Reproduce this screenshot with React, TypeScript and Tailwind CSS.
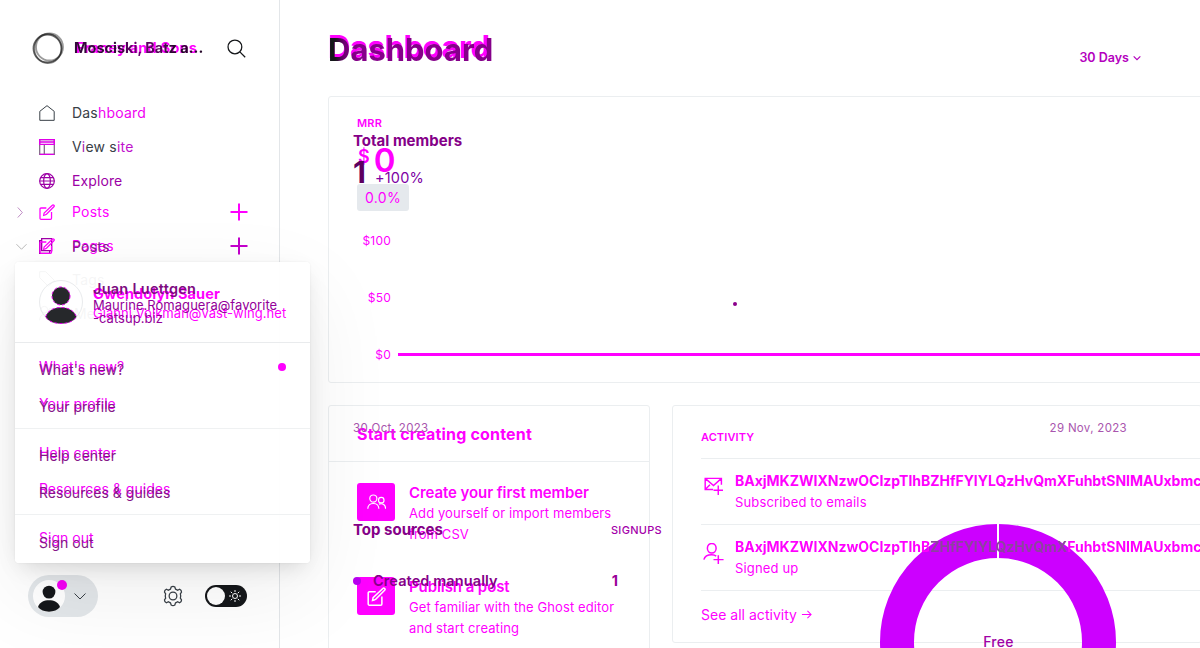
import type { ReactNode } from "react";

type IconProps = { className?: string; children: ReactNode; box?: string; width?: number };

function Icon({ className = "", children, box = "0 0 24 24", width = 1.5 }: IconProps) {
  return (
    <svg viewBox={box} fill="none" stroke="currentColor" strokeWidth={width} className={"shrink-0 " + className}>
      {children}
    </svg>
  );
}

const PenIcon = ({ className }: { className: string }) => (
  <Icon className={className} width={1.9}>
    <path d="M18.8 12v9.5a1.5 1.5 0 0 1-1.5 1.5h-14A1.5 1.5 0 0 1 1.500 21.500v-14A1.500 1.500 0 0 1 3 6h8" />
    <path d="M9 16.500l-2 .500.700-3.500L20 1.800a1.600 1.600 0 0 1 2.300 2.300L11.200 15.300z" />
  </Icon>
);

const Person = ({ className }: { className: string }) => (
  <svg viewBox="0 0 32 38" className={className}>
    <circle cx="16" cy="10" r="9" />
    <path d="M0.500 31C3 24 9 21.500 16 21.500S29 24 31.500 31C28 35.500 23 37.500 16 37.500S4 35.500 0.500 31z" />
  </svg>
);

const Plus = () => (
  <Icon className="ml-auto mr-[31px] size-[18px]" box="0 0 18 18" width={2}>
    <path d="M9 0.500v17M0.500 9h17" />
  </Icon>
);

function Sidebar() {
  return (
    <aside className="flex h-full w-[280px] shrink-0 flex-col border-r border-[#e3e6e9] text-[14px] tracking-[0.200px] text-[#394047]">
      <header className="flex h-24 items-center pl-8 pr-[33px]">
        <svg viewBox="0 0 32 32" className="size-8 shrink-0" fill="none" stroke="#222">
          <circle cx="15.500" cy="16.500" r="14" strokeWidth="1.800" opacity="0.7" />
          <ellipse cx="17.500" cy="15" rx="13.500" ry="13.500" strokeWidth="1.800" opacity="0.45" />
          <ellipse cx="16" cy="16.500" rx="13.500" ry="14.800" strokeWidth="1.400" opacity="0.45" />
        </svg>
        <div className="relative ml-2.5 whitespace-nowrap text-[14.500px] font-bold tracking-normal">
          <span className="absolute left-0.5 top-0 text-[#ff00ff] tracking-[0.250px]">Franey and Sons</span>
          <span className="relative bg-[linear-gradient(90deg,#33083a_45px,#6d0072_60px,#4b0650_90px,#26082a_100px)] bg-clip-text text-transparent">Mosciski, Batz a...</span>
        </div>
        <Icon className="ml-auto size-[19px] text-[#15171a]" width={1.6}>
          <circle cx="10" cy="10" r="8.700" />
          <path d="M16.200 16.200L23 23" />
        </Icon>
      </header>
      <nav className="flex flex-col">
        <div className="flex h-[34px] items-center gap-[17px] pl-[39px]">
          <Icon className="size-4"><path d="M1.200 9.500L12 1l10.800 8.500V23H1.200z" /></Icon>
          <span className="-mt-px">Das<span className="text-[#f000f2]">hboard</span></span>
        </div>
        <div className="flex h-[34px] items-center gap-[17px] pl-[39px]">
          <Icon className="size-4 text-[#85718a]" width={2}>
            <path d="M1 1h22v22H1zM8 8v15" />
            <path d="M1 1h22v7H1zM1 4.500h22M1 23h22" stroke="#e000e8" />
          </Icon>
          <span className="-mt-px">V<span className="text-[#a31bb0]">i</span>ew s<span className="text-[#c010cc]">ite</span></span>
        </div>
        <div className="flex h-[34px] items-center gap-[17px] pl-[39px] text-[#9c00a5]">
          <Icon className="size-4" width={1.8}>
            <circle cx="12" cy="12" r="11" />
            <ellipse cx="12" cy="12" rx="5" ry="11" />
            <path d="M1 12h22M2.500 7h19M2.500 17h19" />
          </Icon>
          <span className="-mt-px tracking-[0.100px]">Explore</span>
        </div>
        <div className="flex h-7 items-center text-[#ff00ff]">
          <Icon className="ml-[15px] size-[11px] text-[#a35aab]"><path d="M6 1l10 11L6 23" /></Icon>
          <PenIcon className="ml-[13px] size-4" />
          <span className="-mt-px ml-[17px]">Posts</span>
          <Plus />
        </div>
        <div className="flex h-10 items-center text-[#c400cc]">
          <Icon className="ml-4 size-[11px] text-[#999]"><path d="M1 7l11 11L23 7" /></Icon>
          <span className="relative ml-3 size-4">
            <Icon className="size-4 text-[#a000a8]" width={2}><path d="M4 1h15v18H4zM4 4H1v19h15v-4" /></Icon>
            <span className="absolute inset-0 text-[#ff00ff]"><PenIcon className="size-4" /></span>
          </span>
          <span className="relative -mt-px ml-[17px]">
            <span className="absolute left-0 top-0 text-[#ff00ff]">Pages</span>
            <span className="relative top-px text-[#85208c]">Posts</span>
          </span>
          <Plus />
        </div>
        <div className="flex h-[26px] items-center gap-[17px] pl-[39px]">
          <Icon className="size-4"><path d="M1 1h9l13 13-9 9L1 10z" /></Icon>
          <span>Tags</span>
        </div>
        <div className="flex h-[42px] items-center gap-[19px] pl-[39px]">
          <Icon className="size-4"><circle cx="8" cy="7" r="5" /><circle cx="18" cy="9" r="4" /><path d="M1 23c0-12 14-12 14 0M16 15c4-1 7 2 7 8" /></Icon>
          <span>Members</span>
        </div>
      </nav>
      <footer className="mb-[31px] mt-auto flex items-center pl-7">
        <div className="relative flex h-[42px] w-[70px] items-center rounded-full bg-[#e3e7ea] pl-[5px]">
          <span className="flex size-8 items-end justify-center rounded-full bg-white">
            <Person className="h-[27px] w-[24px] fill-[#15171a]" />
          </span>
          <Icon className="ml-[9px] size-3" width={2}><path d="M1 7l11 11L23 7" /></Icon>
          <span className="absolute left-[29px] top-[5px] size-2.5 rounded-full bg-[#f500f5]" />
        </div>
        <Icon className="ml-[64px] size-[22px] text-[#394047]" width={1.4}>
          <circle cx="12" cy="12" r="4.200" />
          <path d="M10 2.200 Q12 .8 14 2.200 L14.700 4.500 Q16 5 17 5.700 L19.300 4.600 Q21.300 5.500 21.300 7.700 L20 9.700 Q20.300 11 20.400 12 Q20.300 13 20 14.300 L21.300 16.300 Q21.300 18.500 19.300 19.400 L17 18.300 Q16 19 14.700 19.500 L14 21.800 Q12 23.200 10 21.800 L9.300 19.500 Q8 19 7 18.300 L4.700 19.400 Q2.700 18.500 2.700 16.300 L4 14.300 Q3.600 13 3.600 12 Q3.600 11 4 9.700 L2.700 7.700 Q2.700 5.500 4.700 4.600 L7 5.700 Q8 5 9.300 4.500z" />
        </Icon>
        <div className="ml-[21px] flex h-[22px] w-[42px] items-center justify-between rounded-full bg-[#15171a] pl-0.5 pr-1.5">
          <span className="size-[18px] rounded-full bg-white" />
          <Icon className="size-3 text-white" width={2}>
            <circle cx="12" cy="12" r="5" />
            <path d="M12 0v4M12 20v4M0 12h4M20 12h4M3.500 3.500l3 3M17.500 17.500l3 3M3.500 20.500l3-3M17.500 6.500l3-3" />
          </Icon>
        </div>
      </footer>
    </aside>
  );
}

function MenuItem({ label, lift = "-top-[3px]", dot = false }: { label: string; lift?: string; dot?: boolean }) {
  return (
    <div className="relative flex h-[37px] items-center pl-6 pr-6 text-[14px] tracking-[0.030px]">
      <span className="relative -top-px leading-5">
        <span className={"absolute left-0 whitespace-nowrap text-[#f400f8] " + lift}>{label}</span>
        <span className="relative text-[#851688]">{label}</span>
      </span>
      {dot && <span className="relative -top-1 ml-auto size-2 rounded-full bg-[#ff00ff]" />}
    </div>
  );
}

function UserMenu() {
  return (
    <div className="absolute left-[15px] top-[262px] z-20 flex h-[301px] w-[295px] flex-col rounded bg-white/95 shadow-[0_0_2px_rgba(0,0,0,0.08),0_8px_22px_-6px_rgba(0,0,0,0.150),0_30px_90px_rgba(0,0,0,0.070)]">
      <div className="flex h-[81px] items-center border-b border-[#e9ebed] pl-6">
        <span className="flex size-11 items-center justify-center rounded-full border border-[#e9ebed]">
          <Person className="relative top-[3px] h-[38px] w-8 fill-[#26282b] stroke-[#e000e8] stroke-1 [stroke-dasharray:3_2]" />
        </span>
        <div className="relative ml-2.5 h-[81px] flex-1 whitespace-nowrap">
          <div className="absolute inset-0 flex flex-col pt-[23px] text-[#ff00ff]">
            <span className="text-[14.500px] font-bold leading-[18px] tracking-[0.100px]">Gwendolyn Sauer</span>
            <span className="text-[13px] leading-5 tracking-[0.050px]">Gianni.Volkman@vast-wing.net</span>
          </div>
          <div className="relative flex flex-col pt-[17px] text-[#930099]">
            <span className="text-[14.500px] font-semibold leading-[20px] tracking-[0.250px] text-[#7d0b80]">Juan Luettgen</span>
            <span className="text-[13px] leading-[13px] tracking-[0.040px]">Maurine.Romaguera@favorite<br />-catsup.biz</span>
          </div>
        </div>
      </div>
      <div className="h-[86px] border-b border-[#eff1f2] pt-[9px]">
        <MenuItem label="What's new?" dot />
        <MenuItem label="Your profile" />
      </div>
      <div className="h-[86px] border-b border-[#eff1f2] pt-[9px]">
        <MenuItem label="Help center" />
        <MenuItem label="Resources & guides" lift="-top-1" />
      </div>
      <div className="pt-2.5">
        <MenuItem label="Sign out" lift="-top-[5px]" />
      </div>
    </div>
  );
}

function RevenueCard() {
  return (
    <section className="h-[287px] w-[900px] rounded-[3px] border border-[#ebeef0] pl-7 pt-[18px] text-[#ff00ff]">
      <h2 className="text-[11px] font-semibold leading-4 tracking-[0.200px]">MRR</h2>
      <div className="flex h-[53px] items-start">
        <span className="ml-px mt-[16px] text-[18px] font-semibold leading-5">$</span>
        <span className="ml-1 mt-[9px] text-[33px] font-semibold leading-[40px]">0</span>
      </div>
      <span className="flex h-[27px] w-[52px] items-center justify-center rounded-[3px] bg-[#e5e9ed] text-[14px] tracking-[0.350px]">0.0%</span>
      <div className="mt-5 flex text-[12px] tracking-[0.200px]">
        <div className="flex h-[133px] w-[34px] flex-col justify-between text-right leading-[19px]">
          <span>$100</span><span>$50</span><span>$0</span>
        </div>
        <div className="ml-[7px] mt-[122px] h-[3px] flex-1 bg-[#ff00ff]" />
      </div>
    </section>
  );
}

function Step({ icon, title, children }: { icon: ReactNode; title: string; children: ReactNode }) {
  return (
    <div className="flex gap-3.5">
      <span className="flex size-[38px] items-center justify-center rounded-[3px] bg-[#ff00ff] text-white">{icon}</span>
      <div className="whitespace-nowrap">
        <h3 className="text-[15px] font-semibold leading-5 tracking-[-0.080px]">{title}</h3>
        <p className="text-[13px] leading-[21px] tracking-[0.100px]">{children}</p>
      </div>
    </div>
  );
}

const MEMBER = "BAxjMKZWIXNzwOCIzpTlhBZHfFYlYLQzHvQmXFuhbtSNIMAUxbmc";

function ActivityCard() {
  return (
    <section className="h-[238px] w-[560px] rounded-[3px] border border-[#ebeef0] pl-7 text-[13px] tracking-[0.150px] text-[#ff00ff]">
      <h2 className="h-[53px] border-b border-[#ebeef0] pt-[23px] text-[11px] font-semibold leading-4 tracking-[0.100px]">ACTIVITY</h2>
      <div className="flex h-[66px] border-b border-[#ebeef0] pt-3">
        <Icon className="ml-[3px] mt-[5px] size-[19px]" width={1.8}>
          <path d="M22 11V3H1.500v14h10M1.500 3l10.500 9L22 3M1.500 17l6-6M18 12v12M12 18h12" />
        </Icon>
        <div className="ml-3 whitespace-nowrap">
          <p className="-mt-px mb-px text-[14px] font-bold leading-[21px] tracking-[-0.010px]">{MEMBER}</p>
          <p className="leading-[21px]">Subscribed to emails</p>
        </div>
      </div>
      <div className="flex h-[66px] border-b border-[#ebeef0] pt-3">
        <Icon className="ml-0.5 mt-[6px] size-[21px]" width={1.7}>
          <ellipse cx="10" cy="6" rx="5" ry="5.500" />
          <path d="M1 19c1-4 4-5.500 9-5.500 2 0 4 .500 5 1.500M17.500 14v10M12 19h11.500" />
        </Icon>
        <div className="ml-[11px] whitespace-nowrap">
          <p className="relative z-10 -mt-px mb-px w-max bg-[linear-gradient(90deg,#ff00ff_194px,#8b459d_194px,#8b459d_332px,#ff00ff_332px)] bg-clip-text text-[14px] font-bold leading-[21px] tracking-[-0.010px] text-transparent">{MEMBER}</p>
          <p className="leading-[21px]">Signed up</p>
        </div>
      </div>
      <p className="-mt-px flex h-12 items-center gap-1 text-[14px] tracking-[0.020px]">
        See all activity
        <Icon className="size-[11px]" width={2.2}><path d="M2 12h20M14 4l8 8-8 8" /></Icon>
      </p>
    </section>
  );
}

function MembersLayer() {
  return (
    <div className="absolute inset-0 text-[#850088]">
      <div className="flex pl-[73px] pt-[131px]">
        <div>
          <h2 className="text-[15px] font-bold leading-5">Total members</h2>
          <div className="flex items-end">
            <span className="text-[30px] font-bold leading-[42px] text-[#5d005f]">1</span>
            <span className="ml-[9px] text-[14.500px] leading-[31px] tracking-[0.200px] text-[#7d00a4]">+100%</span>
          </div>
        </div>
      </div>
      <div className="flex h-[225px] items-end pl-[453px]">
        <span className="mb-[112px] size-1 rounded-full bg-[#8b008b]" />
      </div>
      <div className="flex w-[847px] justify-between pl-[73px] text-[11.500px] leading-5 tracking-[0.320px] text-[#a955ae]">
        <span>30 Oct, 2023</span><span>29 Nov, 2023</span>
      </div>
      <div className="flex">
        <div className="w-[382px] pl-[73px] pt-[82px]">
          <div className="flex items-center justify-between">
            <h2 className="text-[15px] font-bold leading-5">Top sources</h2>
            <span className="text-[11px] font-medium tracking-[0.300px] text-[#a400aa]">SIGNUPS</span>
          </div>
          <div className="mt-[31px] flex items-center text-[14.500px] font-semibold leading-5">
            <span className="size-2 rounded-full bg-[#b800ef]" />
            <span className="ml-3 tracking-[0.100px]">Created manually</span>
            <span className="ml-auto mr-[44px] font-bold text-[#990099]">1</span>
          </div>
        </div>
        <svg viewBox="0 0 236 124" className="ml-[218px] mt-[86px] h-[124px] w-[236px] shrink-0">
          <circle cx="118" cy="118" r="101" fill="none" stroke="#cc00ff" strokeWidth="34" />
          <path d="M118 0v35" stroke="white" strokeWidth="2" />
          <text x="118.500" y="123" textAnchor="middle" className="fill-[#a000a5] text-[14px] font-medium tracking-[0.300px]">Free</text>
        </svg>
      </div>
    </div>
  );
}

export default function App() {
  return (
    <div className="relative flex h-[648px] w-[1200px] overflow-hidden bg-white font-['Inter',sans-serif]">
      <Sidebar />
      <main className="relative h-full flex-1 overflow-hidden pl-12">
        <header className="flex h-24 pr-[59px]">
          <h1 className="relative mt-[30px] h-10 text-[31px] font-bold leading-10">
            <span className="absolute left-0 -top-[3px] tracking-[-0.400px] text-[#ff00ff]">Dashboard</span>
            <span className="relative bg-[linear-gradient(90deg,#15171a_7px,#6d0070_16px,#85008a_30px)] bg-clip-text text-transparent">Dashboard</span>
          </h1>
          <span className="ml-auto mt-12 flex h-5 items-center gap-1 text-[12.500px] font-semibold text-[#b400be]">
            30 Days
            <Icon className="size-2" width={3.5}><path d="M2 7l10 10L22 7" /></Icon>
          </span>
        </header>
        <RevenueCard />
        <div className="mt-[22px] flex gap-[22px]">
          <section className="h-[260px] w-[322px] shrink-0 rounded-[3px] border border-[#ebeef0] text-[#ff00ff]">
            <h2 className="h-14 border-b border-[#ebeef0] pl-7 text-[16px] font-bold leading-[57px] tracking-[0.180px]">Start creating content</h2>
            <div className="flex flex-col gap-8 pl-7 pt-[21px]">
              <Step title="Create your first member" icon={
                <Icon className="size-[19px]">
                  <circle cx="8" cy="7" r="4.500" /><circle cx="18" cy="9" r="3.500" />
                  <path d="M1 20c0-9 14-9 14 0M15 14c5-1.500 8.500 1 8.500 6" />
                </Icon>
              }>Add yourself or import members<br />from CSV</Step>
              <Step title="Publish a post" icon={<PenIcon className="size-[19px]" />}>Get familiar with the Ghost editor<br />and start creating</Step>
            </div>
          </section>
          <ActivityCard />
        </div>
        <MembersLayer />
      </main>
      <UserMenu />
    </div>
  );
}
